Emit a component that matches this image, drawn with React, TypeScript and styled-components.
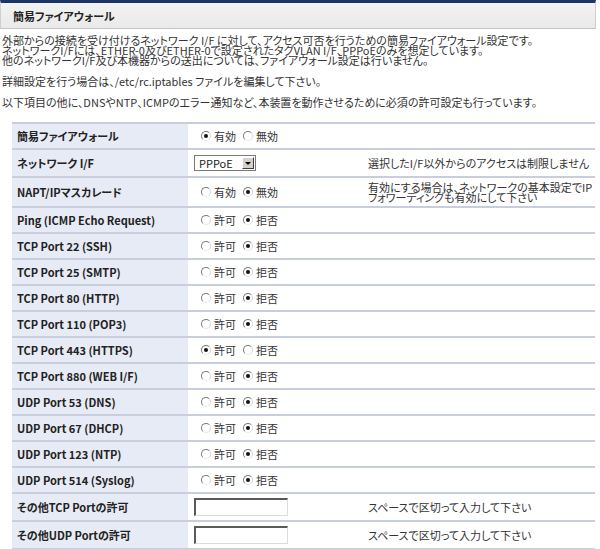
import React from "react";
import styled, { createGlobalStyle } from "styled-components";

const GlobalStyle = createGlobalStyle`
  html, body { margin: 0; padding: 0; background: #fff; }
  body {
    font-family: "Noto Sans CJK JP", "Liberation Sans", sans-serif;
    font-size: 11px;
    font-feature-settings: "palt" 1;
    color: #333;
  }
`;

const Page = styled.div`
  width: 600px;
`;

const Header = styled.h1`
  box-sizing: border-box;
  margin: 0;
  width: 596px;
  height: 29px;
  border-top: 3px solid #1c3566;
  border-left: 1px solid #cfcfcf;
  border-right: 1px solid #cfcfcf;
  border-bottom: 1px solid #c4c4c4;
  background: linear-gradient(#f3f3f3, #e9e9e9);
  display: flex;
  align-items: center;
  padding-left: 12px;
  font-size: 11px;
  font-weight: bold;
  color: #222;
`;

const Intro = styled.div`
  padding: 6px 2px 0;
`;

const Para = styled.p`
  margin: 0 0 11px;
  line-height: 10px;
  white-space: pre-line;
`;

const Table = styled.div`
  margin: 15px 0 0 12px;
  width: 583px;
  border-top: 2px solid #c8cedb;
`;

const Row = styled.div<{ $h: number }>`
  box-sizing: border-box;
  display: grid;
  grid-template-columns: 176px 180px 1fr;
  height: ${(p) => p.$h}px;
  border-bottom: 2px solid #c8cedb;
`;

const Label = styled.div`
  background: #e7ebf5;
  display: flex;
  align-items: center;
  padding-left: 5px;
  font-weight: bold;
  color: #222;
`;

const Value = styled.div`
  display: flex;
  align-items: center;
  padding-left: 6px;
`;

const Desc = styled.div`
  display: flex;
  align-items: center;
  line-height: 10px;
  white-space: pre;
`;

const RadioGroup = styled.div`
  display: flex;
  align-items: center;
  margin-left: 7px;
  gap: 7px;
`;

const RadioItem = styled.label`
  display: flex;
  align-items: center;
  gap: 3px;
`;

const RadioCircle = styled.span<{ $on: boolean }>`
  box-sizing: border-box;
  width: 10px;
  height: 10px;
  border-radius: 50%;
  border: 1px solid;
  border-color: #7a7a7a #d8d8d8 #e8e8e8 #7a7a7a;
  background: #fff;
  display: flex;
  align-items: center;
  justify-content: center;
  &::after {
    content: "";
    width: 4px;
    height: 4px;
    border-radius: 50%;
    background: ${(p) => (p.$on ? "#111" : "transparent")};
  }
`;

const SelectBox = styled.div`
  box-sizing: border-box;
  width: 62px;
  height: 16px;
  border: 1px solid #7a7a7a;
  background: #fff;
  display: flex;
  align-items: center;
  justify-content: space-between;
  padding: 0 1px 0 4px;
  color: #222;
`;

const DropButton = styled.span`
  box-sizing: border-box;
  width: 12px;
  height: 12px;
  background: #d4d0c8;
  border: 1px solid;
  border-color: #fff #404040 #404040 #fff;
  display: flex;
  align-items: center;
  justify-content: center;
  &::after {
    content: "";
    border-left: 3px solid transparent;
    border-right: 3px solid transparent;
    border-top: 3px solid #000;
  }
`;

const TextInput = styled.input`
  box-sizing: border-box;
  width: 94px;
  height: 18px;
  margin: 0;
  padding: 0 2px;
  border: 1px solid;
  border-color: #5a5a5a #dcdcdc #dcdcdc #5a5a5a;
  border-top-width: 2px;
  border-left-width: 2px;
  background: #fff;
  font: inherit;
`;

type Radio = { kind: "radio"; opts: [string, string]; on: 0 | 1 };
type Sel = { kind: "select"; value: string };
type Inp = { kind: "input" };
type RowDef = { label: string; h: number; ctrl: Radio | Sel | Inp; desc?: string };

const port = (label: string, on: 0 | 1 = 1): RowDef => ({
  label,
  h: 26,
  ctrl: { kind: "radio", opts: ["許可", "拒否"], on },
});

const rows: RowDef[] = [
  { label: "簡易ファイアウォール", h: 26, ctrl: { kind: "radio", opts: ["有効", "無効"], on: 0 } },
  { label: "ネットワーク I/F", h: 28, ctrl: { kind: "select", value: "PPPoE" }, desc: "選択したI/F以外からのアクセスは制限しません" },
  {
    label: "NAPT/IPマスカレード",
    h: 30,
    ctrl: { kind: "radio", opts: ["有効", "無効"], on: 1 },
    desc: "有効にする場合は、ネットワークの基本設定でIP\nフォワーディングも有効にして下さい",
  },
  port("Ping (ICMP Echo Request)"),
  port("TCP Port 22 (SSH)"),
  port("TCP Port 25 (SMTP)"),
  port("TCP Port 80 (HTTP)"),
  port("TCP Port 110 (POP3)"),
  port("TCP Port 443 (HTTPS)", 0),
  port("TCP Port 880 (WEB I/F)"),
  port("UDP Port 53 (DNS)"),
  port("UDP Port 67 (DHCP)"),
  port("UDP Port 123 (NTP)"),
  port("UDP Port 514 (Syslog)"),
  { label: "その他TCP Portの許可", h: 28, ctrl: { kind: "input" }, desc: "スペースで区切って入力して下さい" },
  { label: "その他UDP Portの許可", h: 28, ctrl: { kind: "input" }, desc: "スペースで区切って入力して下さい" },
];

function Control({ c }: { c: Radio | Sel | Inp }) {
  if (c.kind === "radio") {
    return (
      <RadioGroup>
        {c.opts.map((o, i) => (
          <RadioItem key={o}>
            <RadioCircle $on={c.on === i} />
            {o}
          </RadioItem>
        ))}
      </RadioGroup>
    );
  }
  if (c.kind === "select") {
    return (
      <SelectBox>
        {c.value}
        <DropButton />
      </SelectBox>
    );
  }
  return <TextInput type="text" defaultValue="" />;
}

export default function App() {
  return (
    <Page>
      <GlobalStyle />
      <Header>簡易ファイアウォール</Header>
      <Intro>
        <Para>
          {"外部からの接続を受け付けるネットワーク I/F に対して、アクセス可否を行うための簡易ファイアウォール設定です。\nネットワークI/Fには、ETHER-0及びETHER-0で設定されたタグVLAN I/F、PPPoEのみを想定しています。\n他のネットワークI/F及び本機器からの送出については、ファイアウォール設定は行いません。"}
        </Para>
        <Para>詳細設定を行う場合は、/etc/rc.iptables ファイルを編集して下さい。</Para>
        <Para>以下項目の他に、DNSやNTP、ICMPのエラー通知など、本装置を動作させるために必須の許可設定も行っています。</Para>
      </Intro>
      <Table>
        {rows.map((r) => (
          <Row key={r.label} $h={r.h}>
            <Label>{r.label}</Label>
            <Value>
              <Control c={r.ctrl} />
            </Value>
            <Desc>{r.desc ?? ""}</Desc>
          </Row>
        ))}
      </Table>
    </Page>
  );
}
